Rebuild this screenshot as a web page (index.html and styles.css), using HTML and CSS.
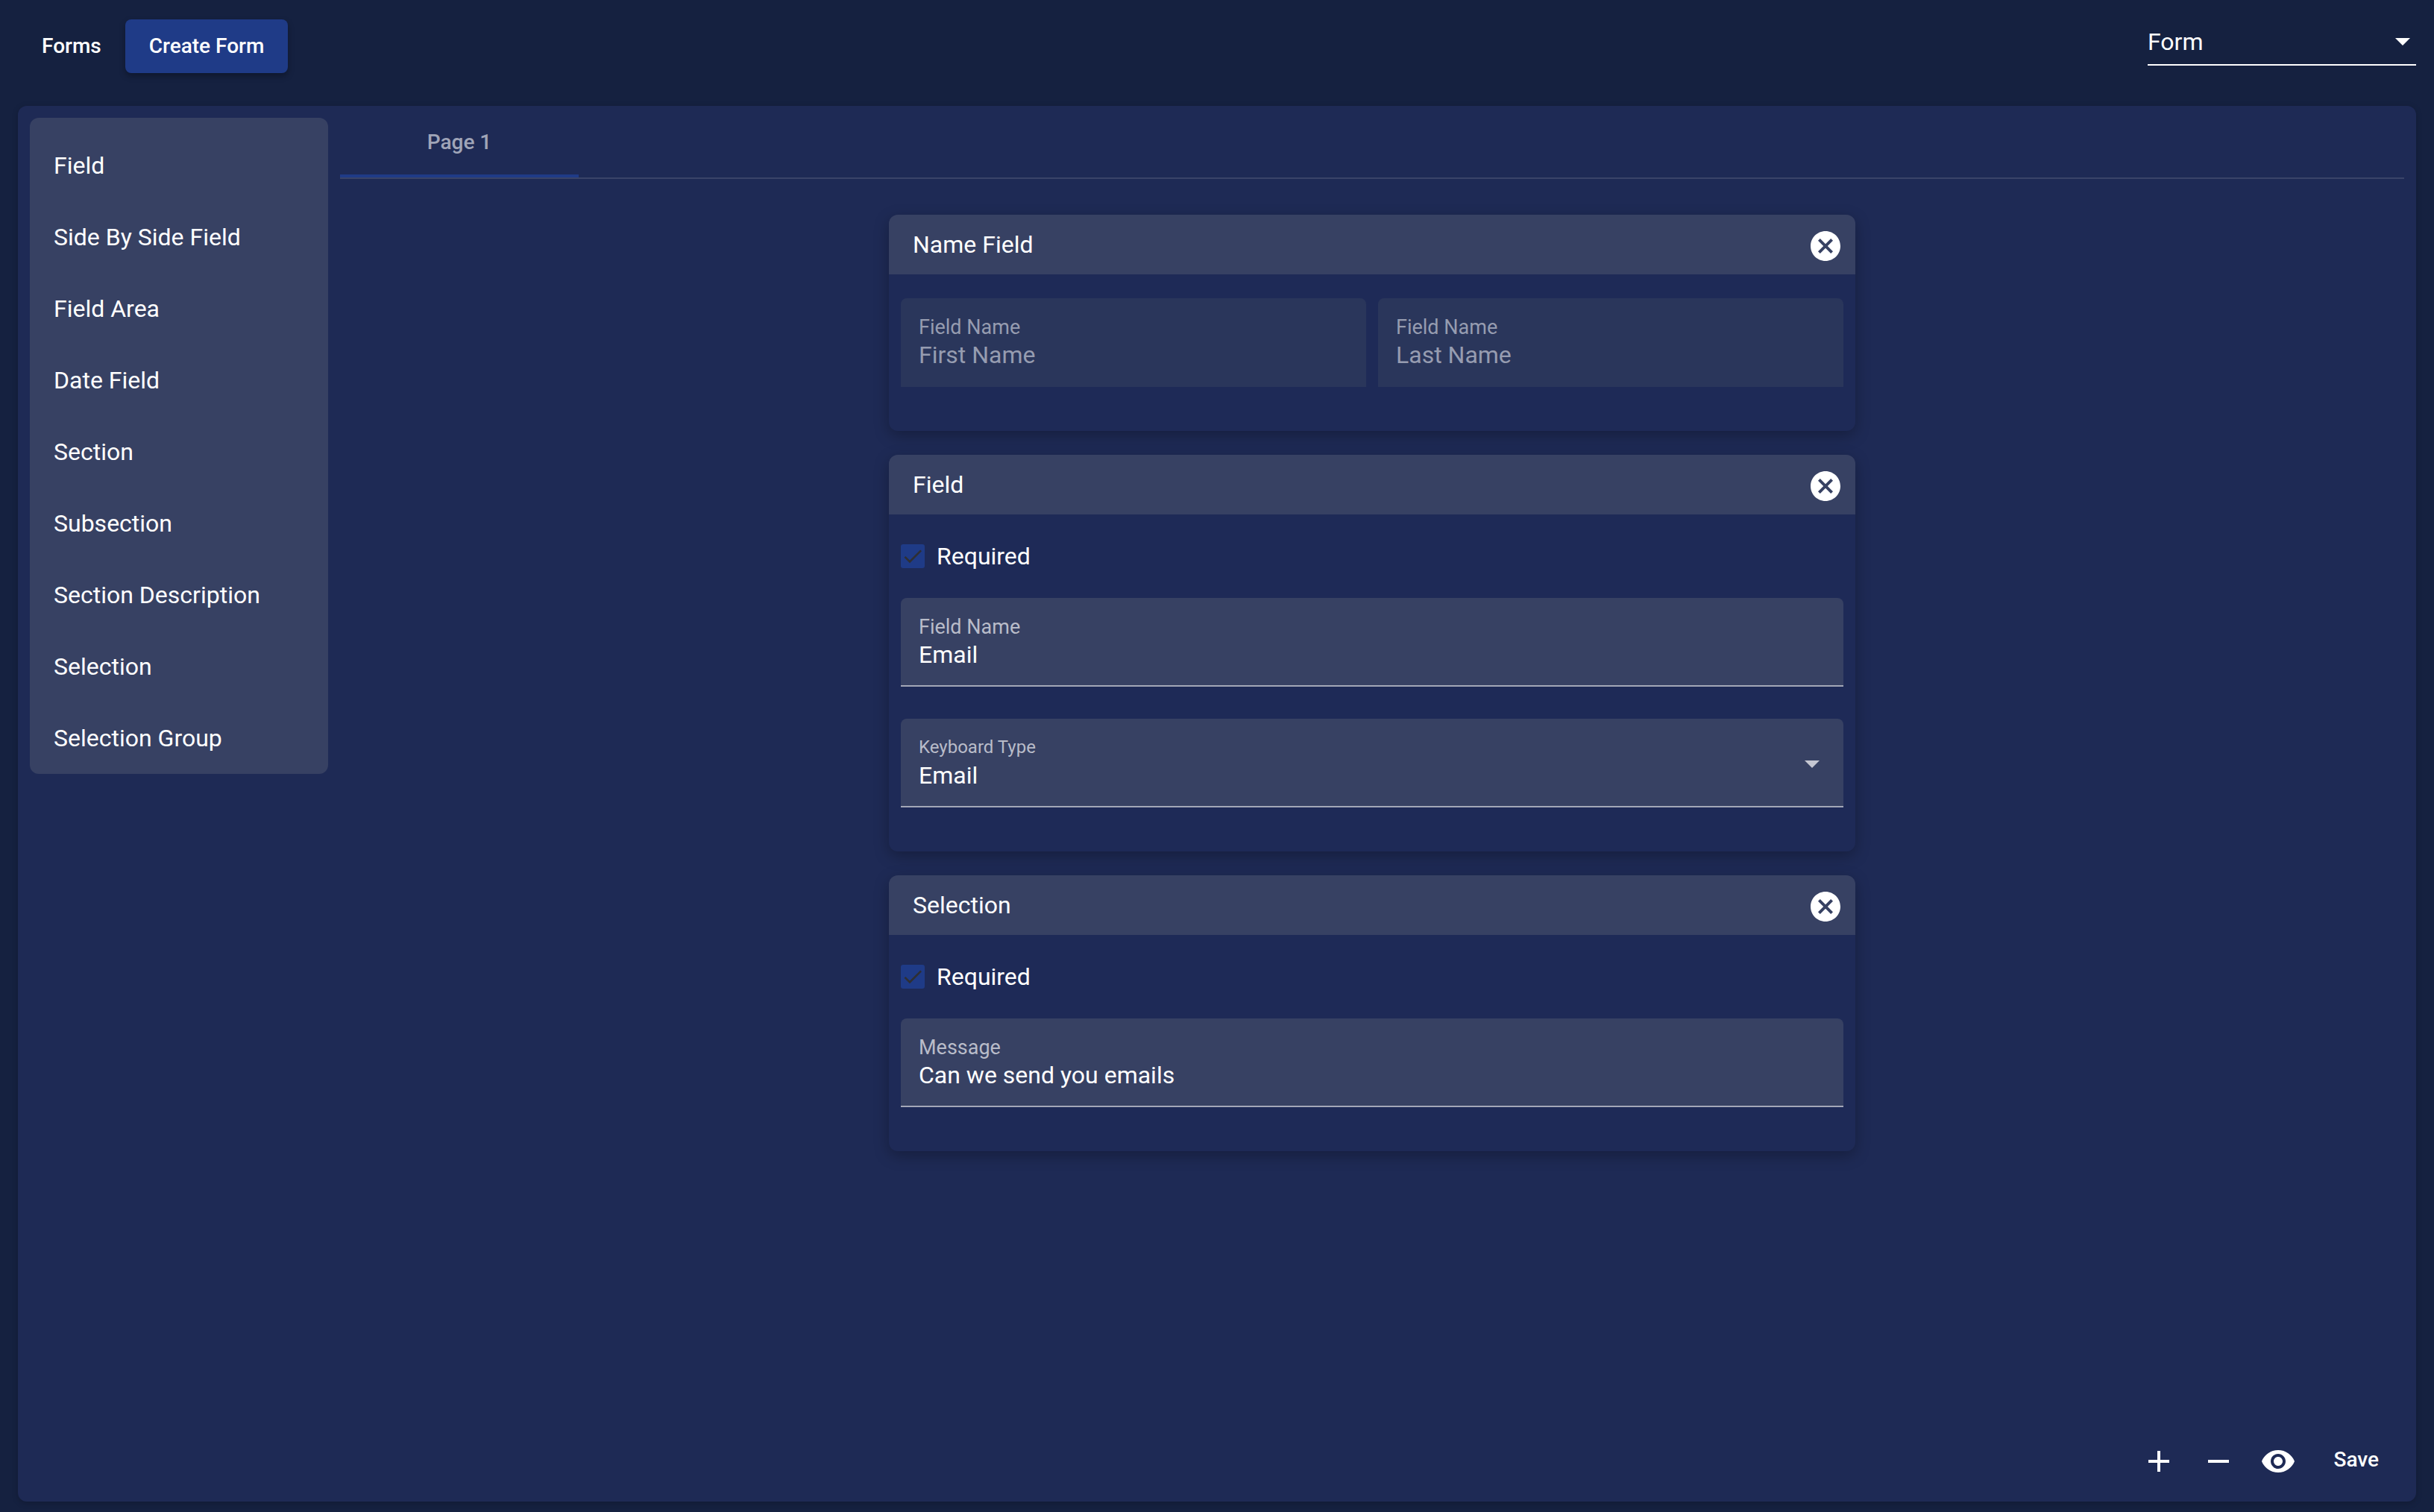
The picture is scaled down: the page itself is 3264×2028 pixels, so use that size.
FILE: index.html
```html
<!DOCTYPE html>
<html>
<head>
    <title>Create Form</title>
    <link rel="stylesheet" href="styles.css">
</head>
<body>
    <header class="topbar">
        <nav class="topnav">
            <a class="nav-btn">Forms</a>
            <a class="nav-btn nav-btn-active">Create Form</a>
        </nav>
        <div class="type-select">
            <span>Form</span>
            <svg class="type-arrow" viewBox="0 0 24 24"><path d="M7 10l5 5 5-5z"/></svg>
        </div>
    </header>

    <div class="panel">
        <aside class="sidebar">
            <div class="sidebar-item">Field</div>
            <div class="sidebar-item">Side By Side Field</div>
            <div class="sidebar-item">Field Area</div>
            <div class="sidebar-item">Date Field</div>
            <div class="sidebar-item">Section</div>
            <div class="sidebar-item">Subsection</div>
            <div class="sidebar-item">Section Description</div>
            <div class="sidebar-item">Selection</div>
            <div class="sidebar-item">Selection Group</div>
        </aside>

        <main class="editor">
            <div class="tabs">
                <div class="tab">Page 1</div>
            </div>

            <div class="canvas">
                <section class="card">
                    <div class="card-head">
                        <span>Name Field</span>
                        <svg class="close-icon" viewBox="0 0 24 24"><path d="M12 2C6.47 2 2 6.47 2 12s4.47 10 10 10 10-4.47 10-10S17.53 2 12 2zm5 13.59L15.59 17 12 13.41 8.41 17 7 15.59 10.59 12 7 8.41 8.41 7 12 10.59 15.59 7 17 8.41 13.41 12 17 15.59z"/></svg>
                    </div>
                    <div class="card-body">
                        <div class="field-row">
                            <div class="field field-disabled">
                                <label>Field Name</label>
                                <div class="field-value">First Name</div>
                            </div>
                            <div class="field field-disabled">
                                <label>Field Name</label>
                                <div class="field-value">Last Name</div>
                            </div>
                        </div>
                    </div>
                </section>

                <section class="card">
                    <div class="card-head">
                        <span>Field</span>
                        <svg class="close-icon" viewBox="0 0 24 24"><path d="M12 2C6.47 2 2 6.47 2 12s4.47 10 10 10 10-4.47 10-10S17.53 2 12 2zm5 13.59L15.59 17 12 13.41 8.41 17 7 15.59 10.59 12 7 8.41 8.41 7 12 10.59 15.59 7 17 8.41 13.41 12 17 15.59z"/></svg>
                    </div>
                    <div class="card-body">
                        <div class="check-row">
                            <span class="check-box"><svg viewBox="0 0 24 24"><path d="M9 16.2L4.8 12l-1.4 1.4L9 19 21 7l-1.4-1.4L9 16.2z"/></svg></span>
                            <span>Required</span>
                        </div>
                        <div class="field">
                            <label>Field Name</label>
                            <div class="field-value">Email</div>
                        </div>
                        <div class="field field-select">
                            <label>Keyboard Type</label>
                            <div class="field-value">Email</div>
                            <svg class="select-arrow" viewBox="0 0 24 24"><path d="M7 10l5 5 5-5z"/></svg>
                        </div>
                    </div>
                </section>

                <section class="card">
                    <div class="card-head">
                        <span>Selection</span>
                        <svg class="close-icon" viewBox="0 0 24 24"><path d="M12 2C6.47 2 2 6.47 2 12s4.47 10 10 10 10-4.47 10-10S17.53 2 12 2zm5 13.59L15.59 17 12 13.41 8.41 17 7 15.59 10.59 12 7 8.41 8.41 7 12 10.59 15.59 7 17 8.41 13.41 12 17 15.59z"/></svg>
                    </div>
                    <div class="card-body">
                        <div class="check-row">
                            <span class="check-box"><svg viewBox="0 0 24 24"><path d="M9 16.2L4.8 12l-1.4 1.4L9 19 21 7l-1.4-1.4L9 16.2z"/></svg></span>
                            <span>Required</span>
                        </div>
                        <div class="field">
                            <label>Message</label>
                            <div class="field-value">Can we send you emails</div>
                        </div>
                    </div>
                </section>
            </div>

            <div class="toolbar">
                <svg class="tool-icon" viewBox="0 0 24 24"><path d="M19 13h-6v6h-2v-6H5v-2h6V5h2v6h6v2z"/></svg>
                <svg class="tool-icon" viewBox="0 0 24 24"><path d="M19 13H5v-2h14v2z"/></svg>
                <svg class="tool-icon" viewBox="0 0 24 24"><path d="M12 4.5C7 4.5 2.73 7.61 1 12c1.73 4.39 6 7.5 11 7.5s9.27-3.11 11-7.5c-1.73-4.39-6-7.5-11-7.5zM12 17c-2.76 0-5-2.24-5-5s2.24-5 5-5 5 2.24 5 5-2.24 5-5 5zm0-8c-1.66 0-3 1.34-3 3s1.34 3 3 3 3-1.34 3-3-1.34-3-3-3z"/></svg>
                <span class="save-btn">Save</span>
            </div>
        </main>
    </div>
</body>
</html>
```

FILE: styles.css
```css
* {
    box-sizing: border-box;
}
html, body {
    height: 100%;
}
body {
    margin: 0;
    height: 2028px;
    overflow: hidden;
    background-color: #152140;
    color: #fff;
    font-family: Roboto, "Liberation Sans", sans-serif;
    font-size: 32px;
}

/* top bar */
.topbar {
    height: 142px;
    display: flex;
    justify-content: space-between;
    align-items: flex-start;
    padding: 26px 24px 0;
}
.topnav {
    display: flex;
}
.nav-btn {
    height: 72px;
    line-height: 72px;
    padding: 0 32px;
    font-size: 28px;
    font-weight: 500;
    border-radius: 8px;
}
.nav-btn-active {
    background-color: #1f3b87;
    box-shadow: 0 4px 8px rgba(0, 0, 0, 0.3);
}
.type-select {
    position: relative;
    width: 360px;
    height: 62px;
    line-height: 60px;
    border-bottom: 2px solid #fff;
}
.type-arrow {
    position: absolute;
    right: -6px;
    top: 5px;
    width: 48px;
    height: 48px;
    fill: #fff;
}

/* main panel */
.panel {
    height: 1872px;
    margin: 0 24px;
    padding: 16px;
    display: flex;
    gap: 16px;
    background-color: #1e2a55;
    border-radius: 12px;
    box-shadow: 0 2px 8px rgba(0, 0, 0, 0.2);
}
.sidebar {
    width: 400px;
    height: 880px;
    flex-shrink: 0;
    padding-top: 16px;
    background-color: #374163;
    border-radius: 12px;
}
.sidebar-item {
    height: 96px;
    line-height: 96px;
    padding-left: 32px;
}
.editor {
    flex: 1;
    display: flex;
    flex-direction: column;
}

/* tabs */
.tabs {
    height: 82px;
    flex-shrink: 0;
    border-bottom: 2px solid #3a4468;
}
.tab {
    width: 320px;
    height: 80px;
    line-height: 66px;
    text-align: center;
    font-size: 28px;
    font-weight: 500;
    color: #a0a5b8;
    border-bottom: 4px solid #1f3b87;
}

/* form cards */
.canvas {
    flex: 1;
    display: flex;
    flex-direction: column;
    align-items: center;
    gap: 32px;
    padding-top: 48px;
}
.card {
    width: 1296px;
    background-color: #1e2a57;
    border-radius: 12px;
    box-shadow: 0 6px 20px rgba(0, 0, 0, 0.28);
}
.card-head {
    height: 80px;
    display: flex;
    justify-content: space-between;
    align-items: center;
    padding: 0 16px 0 32px;
    background-color: #374163;
    border-radius: 12px 12px 0 0;
}
.close-icon {
    width: 48px;
    height: 48px;
    margin-top: 4px;
    fill: #fff;
}
.card-body {
    padding: 32px 16px 59px;
}
.field-row {
    display: flex;
    gap: 16px;
}
.field {
    position: relative;
    height: 119px;
    padding: 22px 24px 0;
    background-color: #374163;
    border-radius: 8px 8px 0 0;
    border-bottom: 2px solid #a3a7b7;
}
.field + .field {
    margin-top: 43px;
}
.field-row .field {
    flex: 1;
    margin-top: 0;
}
.field label {
    display: block;
    height: 32px;
    line-height: 34px;
    font-size: 27px;
    color: #b9bcc9;
}
.field-select label {
    line-height: 32px;
    font-size: 24px;
}
.field-value {
    height: 40px;
    line-height: 40px;
    margin-top: 2px;
}
.field-disabled {
    background-color: #2a365b;
    border-bottom: none;
}
.field-disabled label,
.field-disabled .field-value {
    color: #969cb0;
}
.select-arrow {
    position: absolute;
    right: 18px;
    top: 36px;
    width: 48px;
    height: 48px;
    fill: #c5c7d2;
}
.check-row {
    display: flex;
    align-items: center;
    gap: 16px;
    height: 32px;
    margin: 8px 0 40px;
}
.check-box {
    width: 32px;
    height: 32px;
    background-color: #1f3b87;
    border-radius: 3px;
}
.check-box svg {
    display: block;
    width: 32px;
    height: 32px;
    fill: #2f2f33;
}

/* bottom tools */
.toolbar {
    flex-shrink: 0;
    display: flex;
    align-items: center;
    justify-content: flex-end;
    gap: 32px;
    height: 48px;
    margin-bottom: 14px;
    padding-right: 34px;
    font-size: 28px;
    font-weight: 500;
}
.tool-icon {
    width: 48px;
    height: 48px;
    fill: #fff;
}
.save-btn {
    margin-left: 18px;
    padding-bottom: 6px;
}
```
